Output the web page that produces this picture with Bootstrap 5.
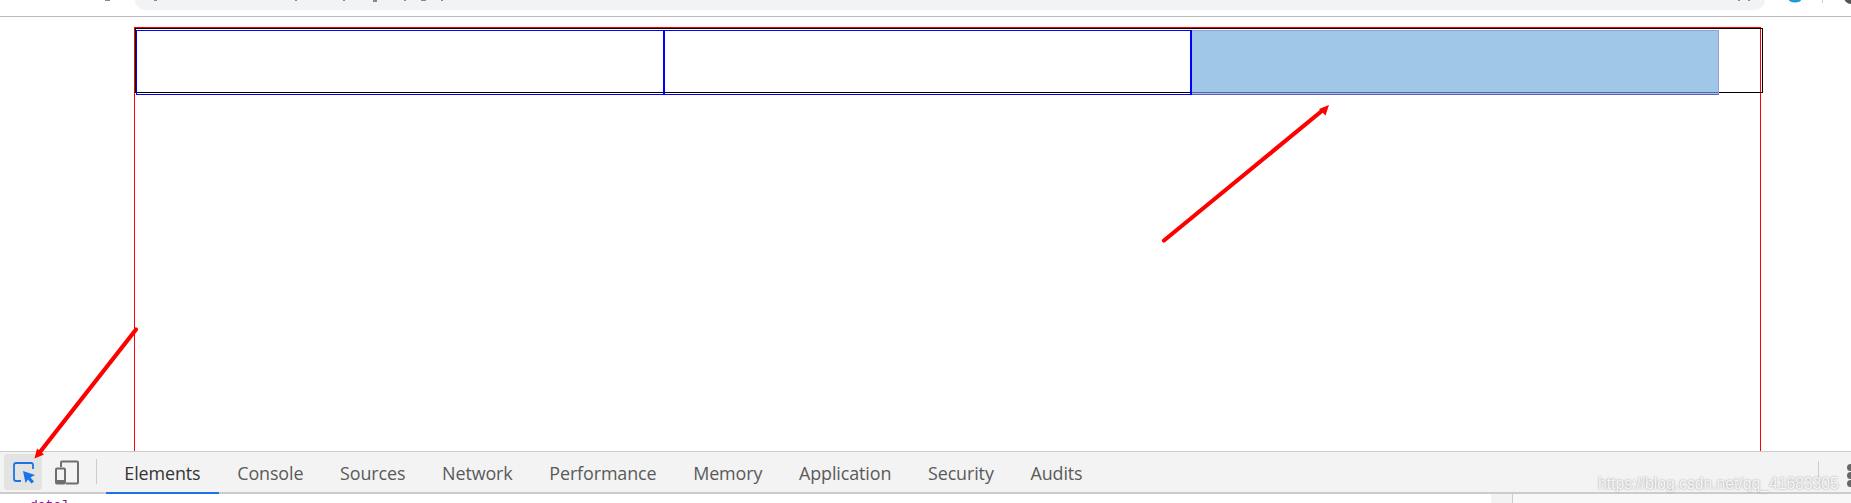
<!DOCTYPE html>
<html lang="en">
  <head>
    <meta charset="UTF-8" />
    <meta name="viewport" content="width=device-width, initial-scale=1.0" />
    <title>Inspect element</title>
    <link
      rel="stylesheet"
      href="https://cdn.jsdelivr.net/npm/bootstrap@5.3.3/dist/css/bootstrap.min.css"
    />
    <style>
      body {
        width: 1851px;
        height: 503px;
        overflow: hidden;
        font-family: "Open Sans", "Liberation Sans", sans-serif;
      }
      /* browser chrome, cut off at the top */
      .chrome-strip {
        height: 17px;
        border-bottom: 1px solid #bbb;
        padding-left: 135px;
      }
      .address-bar {
        width: 1630px;
        height: 10px;
        background: #f1f3f4;
        border-radius: 0 0 14px 14px;
      }
      /* the page being inspected */
      .page-area {
        height: 434px;
        padding: 10px 0 0 134px;
      }
      .outer-red {
        width: 1627px;
        height: 424px;
        border: 1px solid #f00;
        border-bottom: 0;
      }
      .box-black {
        width: 1628px;
        height: 65px;
        border: 1px solid #000;
      }
      .cells {
        width: 1583px;
        height: 65px;
        margin-top: 1px;
      }
      .cell-blue {
        flex: 1 1 0;
        border: 1px solid #00f;
      }
      .hover-mask {
        top: -1px;
        right: -1px;
        bottom: -1px;
        left: 0;
        background: rgba(111, 168, 220, 0.66);
        border-top: 1px solid #8fa0d6;
        border-right: 1px solid #9c9ad2;
        border-bottom: 1px solid #5f55d6;
      }
      /* devtools */
      .tools-bar {
        height: 43px;
        background: #f3f3f3;
        border-top: 1px solid #ccc;
        border-bottom: 2px solid #ccc;
        padding: 2px 0 0 4px;
      }
      .inspect-btn {
        width: 38px;
        height: 36px;
        background: #e3e3e3;
        border-radius: 3px;
      }
      .device-btn {
        margin: 4px 0 0 12px;
      }
      .tools-sep {
        width: 1px;
        height: 25px;
        background: #ccc;
        margin: 5px 9px 0 16px;
      }
      .tool-tab {
        height: 40px;
        margin-top: -2px;
        padding: 0 18.35px;
        font-size: 17.9px;
        line-height: 42px;
        color: #5a5a5a;
        letter-spacing: -0.1px;
      }
      .tool-tab.on {
        color: #333;
        position: relative;
      }
      .tool-tab.on::after {
        content: "";
        position: absolute;
        left: 0;
        right: 0;
        top: 40px;
        height: 2px;
        background: #1a73e8;
      }
      .right-sep {
        width: 1px;
        height: 18px;
        background: #ccc;
        margin: 7px 28px 0 0;
      }
      .menu-dots {
        width: 7px;
        margin: 10px -3px 0 0;
      }
      .menu-dots i {
        display: block;
        width: 7px;
        height: 7px;
        border-radius: 50%;
        background: #666;
        margin-bottom: 1px;
      }
      .watermark {
        left: 1598px;
        top: 474px;
        font-family: "Liberation Sans", Arial, sans-serif;
        font-size: 15.7px;
        line-height: 20px;
        color: rgba(255, 255, 255, 0.9);
        text-shadow: 0 0 2px rgba(120, 120, 120, 0.8);
      }
      .dom-strip {
        height: 9px;
      }
      .dom-code {
        width: 1491px;
        padding: 5px 0 0 30px;
        font-family: "Liberation Mono", monospace;
        font-size: 13px;
        line-height: 13px;
        color: #881280;
      }
      .side-gutter {
        width: 22px;
        background: #f3f3f3;
        border-right: 1px solid #ccc;
      }
      .side-rest {
        background: #f8f8f8;
      }
      .ink-layer {
        left: 0;
        top: 0;
        pointer-events: none;
      }
    </style>
  </head>
  <body class="position-relative bg-white">
    <div class="chrome-strip"><div class="address-bar"></div></div>

    <div class="page-area">
      <div class="outer-red">
        <div class="box-black">
          <div class="cells d-flex">
            <div class="cell-blue"></div>
            <div class="cell-blue"></div>
            <div class="cell-blue position-relative">
              <div class="hover-mask position-absolute"></div>
            </div>
          </div>
        </div>
      </div>
    </div>

    <div class="tools-bar d-flex">
      <div class="inspect-btn">
        <svg width="38" height="36" viewBox="0 0 38 36">
          <path
            d="M17 27H12a2 2 0 0 1-2-2V11a2 2 0 0 1 2-2h15a2 2 0 0 1 2 2v4"
            fill="none"
            stroke="#1a73e8"
            stroke-width="1.8"
          />
          <path
            d="M19 17l12 4-4.5 2.5 3.5 4-2.5 2-3.5-4-2.5 3.5z"
            fill="#1a73e8"
          />
        </svg>
      </div>
      <div class="device-btn">
        <svg width="26" height="26" viewBox="0 0 26 26">
          <path
            d="M7 8V3.5a1 1 0 0 1 1-1h15a1 1 0 0 1 1 1v20a1 1 0 0 1-1 1H12"
            fill="none"
            stroke="#6e6e6e"
            stroke-width="2"
          />
          <rect
            x="2"
            y="9.5"
            width="9"
            height="15"
            rx="1"
            fill="#f3f3f3"
            stroke="#6e6e6e"
            stroke-width="2"
          />
          <rect x="2" y="21" width="9" height="3.5" fill="#6e6e6e" />
        </svg>
      </div>
      <div class="tools-sep"></div>
      <nav class="nav flex-nowrap">
        <div class="tool-tab on">Elements</div>
        <div class="tool-tab">Console</div>
        <div class="tool-tab">Sources</div>
        <div class="tool-tab">Network</div>
        <div class="tool-tab">Performance</div>
        <div class="tool-tab">Memory</div>
        <div class="tool-tab">Application</div>
        <div class="tool-tab">Security</div>
        <div class="tool-tab">Audits</div>
      </nav>
      <div class="d-flex ms-auto">
        <div class="right-sep"></div>
        <div class="menu-dots"><i></i><i></i><i></i></div>
      </div>
    </div>

    <div class="dom-strip d-flex overflow-hidden">
      <div class="dom-code">data]</div>
      <div class="side-gutter"></div>
      <div class="side-rest flex-grow-1"></div>
    </div>

    <div class="watermark position-absolute">https://blog.csdn.net/qq_41683305</div>

    <!-- hand drawn annotation arrows and the cut off chrome icons -->
    <svg class="ink-layer position-absolute" width="1851" height="503">
      <g stroke="#f00" stroke-width="4.2" stroke-linecap="round" fill="#f00">
        <line x1="1164" y1="240.5" x2="1323" y2="110" />
        <line x1="136" y1="329.5" x2="40" y2="452" />
      </g>
      <polygon fill="#f00" points="1329,105 1319,109 1325.5,115.5" />
      <polygon fill="#f00" points="34.5,458.5 37,448.5 44,454.5" />
      <g fill="#888">
        <rect x="105" y="0" width="5" height="1" />
        <rect x="154" y="0" width="3" height="1" />
        <rect x="295" y="0" width="2" height="1" />
        <rect x="343" y="0" width="2" height="1" />
        <rect x="373" y="0" width="4" height="2" />
        <rect x="404" y="0" width="2" height="1" />
        <rect x="421" y="0" width="5" height="1" />
        <rect x="441" y="0" width="2" height="1" />
        <rect x="1738" y="0" width="2" height="1" />
        <rect x="1748" y="0" width="2" height="1" />
      </g>
      <ellipse cx="1795" cy="0" rx="6" ry="2.5" fill="#1a9be0" />
      <rect x="1822" y="0" width="1" height="3" fill="#ccc" />
      <circle cx="1851" cy="-3" r="7" fill="#555" />
    </svg>
  </body>
</html>
